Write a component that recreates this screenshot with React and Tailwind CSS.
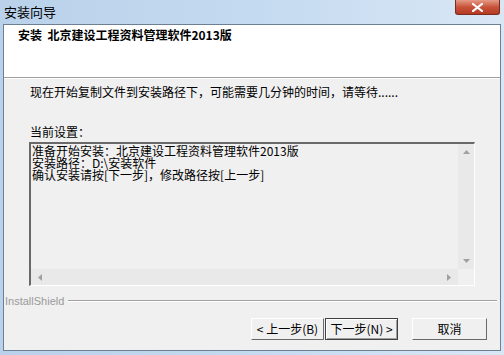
export default function App() {
  const font = { fontFamily: '"SimSun","Noto Sans CJK SC","Liberation Sans",sans-serif' };

  return (
    <div
      className="w-[504px] h-[355px] flex flex-col bg-gradient-to-r from-[#b9d1ea] via-[#c4daf0] to-[#d9e7f5] overflow-hidden"
      style={font}
    >
      {/* title bar */}
      <div className="h-[24px] flex items-start justify-between shrink-0">
        <span className="pl-[4px] pt-[4px] text-[13px] leading-[16px] text-black">安装向导</span>
        <div className="mr-[4px] w-[45px] h-[15px] rounded-b-[3px] border border-t-0 border-[#7a2a1e] bg-gradient-to-b from-[#e49a86] via-[#c8523a] to-[#b53a22] flex items-center justify-center">
          <svg width="11" height="9" viewBox="0 0 11 9">
            <path d="M1 1 L10 8 M10 1 L1 8" stroke="#fff" strokeWidth="2.2" strokeLinecap="square" />
          </svg>
        </div>
      </div>

      {/* client */}
      <div className="flex-1 mx-[3px] mb-[4px] border border-[#6d7f93] bg-[#f0f0f0] flex flex-col">
        {/* header */}
        <div className="h-[53px] bg-white border-b border-[#a0a0a0] shrink-0">
          <div className="pl-[14px] pt-[2px] text-[12px] leading-[16px] font-bold text-black">
            安装&nbsp;&nbsp;北京建设工程资料管理软件2013版
          </div>
        </div>
        <div className="h-px bg-white shrink-0" />

        <div className="pl-[26px] pt-[5px] text-[12px] leading-[16px] text-black">
          现在开始复制文件到安装路径下，可能需要几分钟的时间，请等待......
        </div>

        <div className="pl-[26px] pt-[24px] text-[12px] leading-[16px] text-black">当前设置：</div>

        {/* text box */}
        <div className="ml-[25px] mt-[2px] w-[446px] h-[144px] border-t-2 border-l-2 border-t-[#696969] border-l-[#696969] border-r border-b border-r-white border-b-white flex flex-col">
          <div className="flex flex-1 min-h-0">
            <div className="flex-1 pl-[1px] pt-[1px] text-[12px] leading-[12px] text-black">
              <div>准备开始安装：北京建设工程资料管理软件2013版</div>
              <div>安装路径：D:\安装软件</div>
              <div>确认安装请按[下一步]，修改路径按[上一步]</div>
            </div>
            <div className="w-[16px] bg-[#e9e9e9] flex flex-col items-center justify-between py-[6px]">
              <svg width="7" height="4" viewBox="0 0 7 4"><path d="M0 4 L3.5 0 L7 4Z" fill="#a0a0a0" /></svg>
              <svg width="7" height="4" viewBox="0 0 7 4"><path d="M0 0 L3.5 4 L7 0Z" fill="#a0a0a0" /></svg>
            </div>
          </div>
          <div className="h-[16px] flex shrink-0">
            <div className="flex-1 bg-[#e9e9e9] flex items-center justify-between px-[7px]">
              <svg width="4" height="7" viewBox="0 0 4 7"><path d="M4 0 L0 3.5 L4 7Z" fill="#a0a0a0" /></svg>
              <svg width="4" height="7" viewBox="0 0 4 7"><path d="M0 0 L4 3.5 L0 7Z" fill="#a0a0a0" /></svg>
            </div>
            <div className="w-[16px] bg-[#f0f0f0]" />
          </div>
        </div>

        {/* InstallShield line */}
        <div className="flex items-center mt-[8px] pr-[3px]">
          <span className="pl-[1px] text-[11px] leading-[14px] text-[#9a9a9a]" style={{ fontFamily: '"Liberation Sans",sans-serif' }}>
            InstallShield
          </span>
          <div className="flex-1 ml-[4px] flex flex-col">
            <div className="h-px bg-[#a0a0a0]" />
            <div className="h-px bg-white" />
          </div>
        </div>

        {/* buttons */}
        <div className="flex justify-end items-center mt-[10px] pr-[13px]">
          <button className="w-[73px] h-[22px] bg-[#f0f0f0] border border-t-white border-l-white border-r-[#696969] border-b-[#696969] text-[12px] leading-[14px] text-black flex items-center justify-center">
            &lt; 上一步(B)
          </button>
          <button className="ml-[1px] w-[73px] h-[22px] bg-[#f0f0f0] border border-[#404040] shadow-[inset_1px_1px_0_#fff,inset_-1px_-1px_0_#a0a0a0] text-[12px] leading-[14px] text-black flex items-center justify-center">
            下一步(N) &gt;
          </button>
          <button className="ml-[14px] w-[75px] h-[22px] bg-[#f0f0f0] border border-t-white border-l-white border-r-[#696969] border-b-[#696969] text-[12px] leading-[14px] text-black flex items-center justify-center">
            取消
          </button>
        </div>
      </div>
    </div>
  );
}
